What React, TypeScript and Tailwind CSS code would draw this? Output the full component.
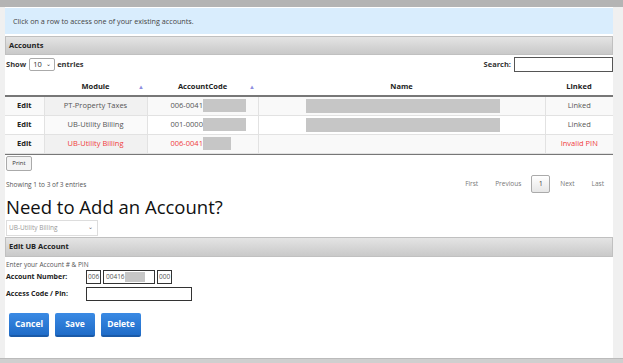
import React from "react"

const rows = [
  { module: "PT-Property Taxes", code: "006-0041", codeBar: "w-[43px]", name: true, linked: "Linked", bad: false },
  { module: "UB-Utility Billing", code: "001-0000", codeBar: "w-[43px]", name: true, linked: "Linked", bad: false },
  { module: "UB-Utility Billing", code: "006-00416", codeBar: "w-[28px]", name: false, linked: "Invalid PIN", bad: true },
]

const SortArrow = () => (
  <span className="absolute right-[3px] top-[5px] text-[6px] text-[#8e8ee0]">▲</span>
)

export default function App() {
  return (
    <div
      className="w-[623px] h-[363px] overflow-hidden bg-[#f0f0f0] text-[#333] flex flex-col"
      style={{ fontFamily: '"Open Sans", "Noto Sans", sans-serif' }}
    >
      <div className="h-[7px] bg-[#b4b4b4] shrink-0" />
      <div className="flex flex-1">
        <div className="w-[5px] shrink-0" />
        <div className="w-[608px] bg-white flex flex-col">
          <div className="h-[26px] mt-[1px] bg-[#d9edfd] flex items-center px-[8px] text-[7.2px] text-[#444]">
            Click on a row to access one of your existing accounts.
          </div>
          <div className="h-[19px] mt-[2px] bg-gradient-to-b from-[#e4e4e4] to-[#c9c9c9] border border-[#c0c0c0] flex items-center px-[3px] text-[7.5px] font-bold text-[#222]">
            Accounts
          </div>
          <div className="flex items-center justify-between h-[17px] mt-[1px] text-[7.5px] font-bold">
            <div className="flex items-center">
              <span className="ml-[1px]">Show</span>
              <div className="ml-[3px] w-[26px] h-[13px] border border-[#aaa] rounded-[2px] flex items-center justify-between px-[3px] font-normal">
                <span>10</span>
                <span className="text-[6px]">⌄</span>
              </div>
              <span className="ml-[2px]">entries</span>
            </div>
            <div className="flex items-center">
              <span>Search:</span>
              <div className="ml-[3px] w-[99px] h-[15px] border border-[#555]" />
            </div>
          </div>
          <table className="mt-[5px] w-[608px] table-fixed border-collapse text-[7.5px]">
            <colgroup>
              <col className="w-[39px]" />
              <col className="w-[103px]" />
              <col className="w-[111px]" />
              <col className="w-[287px]" />
              <col className="w-[68px]" />
            </colgroup>
            <thead>
              <tr className="h-[18px] border-b-2 border-[#777] font-bold text-[#222]">
                <th />
                <th className="relative">Module<SortArrow /></th>
                <th className="relative">AccountCode<SortArrow /></th>
                <th>Name</th>
                <th>Linked</th>
              </tr>
            </thead>
            <tbody>
              {rows.map((r, i) => (
                <tr
                  key={i}
                  className={
                    "h-[19px] border-b border-[#e2e2e2] " +
                    (i % 2 === 0 ? "bg-[#f9f9f9]" : "bg-white") +
                    (r.bad ? " text-[#f03c3c]" : " text-[#555]")
                  }
                >
                  <td className="text-center font-bold text-[#222]">Edit</td>
                  <td className={"text-center border-l border-[#e2e2e2] " + (i % 2 === 0 ? "bg-[#f1f1f1]" : "bg-[#fafafa]")}>
                    {r.module}
                  </td>
                  <td className="border-l border-[#e2e2e2]">
                    <div className="flex items-center pl-[23px]">
                      <span>{r.code}</span>
                      <span className={"h-[13px] bg-[#c6c6c6] " + (r.bad ? "-ml-[4px] " : "") + r.codeBar} />
                    </div>
                  </td>
                  <td className="border-l border-[#e2e2e2]">
                    {r.name ? <div className="ml-[47px] w-[194px] h-[14px] bg-[#c6c6c6]" /> : null}
                  </td>
                  <td className="text-center border-l border-[#e2e2e2]">{r.linked}</td>
                </tr>
              ))}
            </tbody>
          </table>
          <div className="border-t border-[#777]" />
          <div className="flex items-start justify-between">
            <div className="flex flex-col">
              <button className="ml-[1px] mt-[1px] w-[26px] h-[15px] border border-[#aaa] rounded-[2px] bg-[#f4f4f4] text-[6px] text-[#333]">
                Print
              </button>
              <div className="mt-[9px] ml-[1px] text-[6.5px] text-[#555]">Showing 1 to 3 of 3 entries</div>
            </div>
            <div className="flex items-center mt-[20px] mr-[9px] text-[6.5px] text-[#777]">
              <span className="mr-[17px]">First</span>
              <span className="mr-[10px]">Previous</span>
              <span className="w-[19px] h-[18px] border border-[#aaa] rounded-[2px] bg-gradient-to-b from-white to-[#e6e6e6] flex items-center justify-center text-[#333] mr-[10px]">
                1
              </span>
              <span className="mr-[17px]">Next</span>
              <span>Last</span>
            </div>
          </div>
          <div className="mt-[3px] ml-[1px] text-[18.5px] leading-[22px] text-[#111]">Need to Add an Account?</div>
          <div className="mt-[2px] ml-[1px] w-[92px] h-[16px] border border-[#ddd] flex items-center justify-between px-[2px] text-[6.5px] text-[#999]">
            <span>UB-Utility Billing</span>
            <span className="text-[6px] mr-[2px] text-[#666]">⌄</span>
          </div>
          <div className="h-[20px] mt-[1px] bg-gradient-to-b from-[#e4e4e4] to-[#c9c9c9] border border-[#c0c0c0] flex items-center px-[3px] text-[7.5px] font-bold text-[#222]">
            Edit UB Account
          </div>
          <div className="mt-[3px] ml-[1px] text-[6.5px] text-[#555]">Enter your Account # &amp; PIN</div>
          <div className="flex items-center ml-[1px] mt-[1px] text-[7px] font-bold text-[#222]">
            <span className="w-[80px]">Account Number:</span>
            <div className="flex items-center gap-[2px]">
              <div className="w-[15px] h-[14px] border border-[#333] text-[6.5px] font-normal text-[#555] flex items-center pl-[1px]">006</div>
              <div className="w-[52px] h-[14px] border border-[#333] text-[6.5px] font-normal text-[#555] flex items-center pl-[2px]">
                <span>00416</span>
                <span className="w-[20px] h-[10px] bg-[#c6c6c6]" />
              </div>
              <div className="w-[15px] h-[14px] border border-[#333] text-[6.5px] font-normal text-[#555] flex items-center pl-[1px]">000</div>
            </div>
          </div>
          <div className="flex items-center ml-[1px] mt-[3px] text-[7px] font-bold text-[#222]">
            <span className="w-[80px]">Access Code / Pin:</span>
            <div className="w-[106px] h-[14px] border border-[#333]" />
          </div>
          <div className="flex gap-[6px] ml-[4px] mt-[12px]">
            {["Cancel", "Save", "Delete"].map((b) => (
              <button
                key={b}
                className="w-[40px] h-[24px] rounded-[2px] bg-gradient-to-b from-[#3a8ae4] to-[#1f6cc8] border-b-2 border-[#1a5aa8] text-white text-[8.5px] font-bold"
              >
                {b}
              </button>
            ))}
          </div>
        </div>
        <div className="w-[10px] shrink-0" />
      </div>
      <div className="h-[5px] bg-[#cfcfcf] border-t border-[#bbb] shrink-0" />
    </div>
  )
}
